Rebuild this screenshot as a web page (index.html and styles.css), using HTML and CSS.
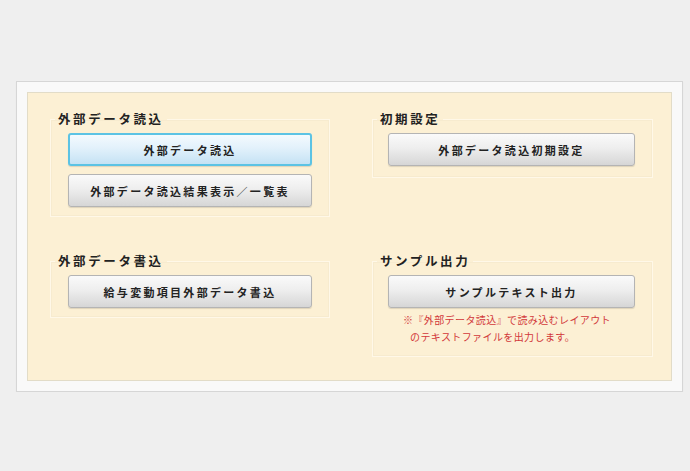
FILE: index.html
```html
<!DOCTYPE html>
<html lang="ja">
<head>
<meta charset="utf-8">
<link rel="stylesheet" href="styles.css">
</head>
<body>
<div class="panel">
  <div class="inner">
    <fieldset class="group g-left">
      <legend>外部データ読込</legend>
      <div class="btns">
        <button class="btn active">外部データ読込</button>
        <button class="btn">外部データ読込結果表示／一覧表</button>
      </div>
    </fieldset>
    <fieldset class="group g-right">
      <legend>初期設定</legend>
      <div class="btns">
        <button class="btn">外部データ読込初期設定</button>
      </div>
    </fieldset>
    <fieldset class="group g-left">
      <legend>外部データ書込</legend>
      <div class="btns">
        <button class="btn">給与変動項目外部データ書込</button>
      </div>
    </fieldset>
    <fieldset class="group g-right">
      <legend>サンプル出力</legend>
      <div class="btns">
        <button class="btn">サンプルテキスト出力</button>
      </div>
      <p class="note">※『外部データ読込』で読み込むレイアウト<br><span class="indent">のテキストファイルを出力します。</span></p>
    </fieldset>
  </div>
</div>
</body>
</html>
```

FILE: styles.css
```css
html, body {
  margin: 0;
  padding: 0;
  background: #efefef;
  font-family: "Noto Sans CJK JP", "Liberation Sans", sans-serif;
}
body {
  padding: 81px 6px 0 16px;
}
.panel {
  width: 667px;
  height: 311px;
  border: 1px solid #d6d6d6;
  background: #f9f9f9;
  padding: 10px;
  box-sizing: border-box;
  box-shadow: 0 1px 1px rgba(0,0,0,0.05);
}
.inner {
  height: 100%;
  box-sizing: border-box;
  border: 1px solid #e2dcc8;
  background: #fcf0d4;
  padding: 19px 20px 0 22px;
  display: grid;
  grid-template-columns: 280px 281px;
  column-gap: 42px;
  row-gap: 14px;
  align-items: start;
}
.group {
  margin: 0;
  border: 1px solid #fff8e8;
  box-shadow: inset 0 0 0 1px #f7ebcf;
  padding: 7px 17px 9px 17px;
  min-width: 0;
}
.g-left legend {
  margin-left: -13px;
}
.g-right {
  padding-left: 15px;
  padding-right: 17px;
  padding-bottom: 11px;
}
.g-right legend {
  margin-left: -11px;
}
.group legend {
  padding: 0 3px 0 3px;
  font-size: 12.5px;
  line-height: 14px;
  font-weight: bold;
  letter-spacing: 2.6px;
  color: #222;
}
.btns {
  display: flex;
  flex-direction: column;
  gap: 8px;
}
.btn {
  height: 33px;
  width: 100%;
  margin: 0;
  border: 1px solid #b4b4b4;
  border-radius: 3px;
  background: linear-gradient(#fafafa 0%, #eeeeee 45%, #d6d6d6 100%);
  box-shadow: 0 1px 1px rgba(0,0,0,0.12);
  font-family: "Noto Sans CJK JP", "Liberation Sans", sans-serif;
  font-size: 11px;
  font-weight: bold;
  letter-spacing: 2.3px;
  color: #222;
  padding: 0;
}
.btn.active {
  border: 2px solid #5cc3e4;
  background: linear-gradient(#f4fafe 0%, #e2f1fb 45%, #c5e2f4 100%);
}
.note {
  margin: 3px 0 0 15px;
  font-size: 10px;
  line-height: 17px;
  letter-spacing: 0.4px;
  color: #d2383a;
}
.note .indent {
  padding-left: 7px;
}
```
